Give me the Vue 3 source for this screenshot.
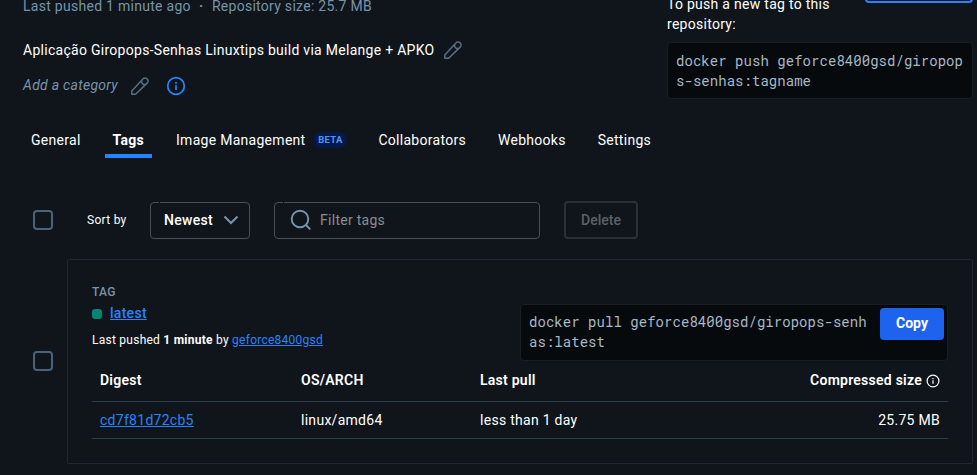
<script setup>
const tabs = [
  { label: 'General' },
  { label: 'Tags', active: true },
  { label: 'Image Management', badge: 'BETA' },
  { label: 'Collaborators' },
  { label: 'Webhooks' },
  { label: 'Settings' },
]
const images = [
  { digest: 'cd7f81d72cb5', arch: 'linux/amd64', lastPull: 'less than 1 day', size: '25.75 MB' },
]
</script>

<template>
  <main class="page">
    <header class="header">
      <div class="summary">
        <p class="meta"><span>Last pushed 1 minute ago</span><span class="dot">·</span><span class="repo-size">Repository size: 25.7 MB</span></p>
        <div class="description">
          <span class="desc-text">Aplicação Giropops-Senhas Linuxtips build via Melange + APKO</span>
          <svg class="pencil" viewBox="0 0 20 20"><path d="M1.800 18.200V15L12.900 2.900a2.700 2.700 0 0 1 4.200 0a2.700 2.700 0 0 1 0 4.200L5.600 18.200zM11.600 4.400v2.200l1.800 1.900h2.200" /></svg>
        </div>
        <div class="category">
          <em class="cat-text">Add a category</em>
          <svg class="pencil" viewBox="0 0 20 20"><path d="M1.800 18.200V15L12.900 2.900a2.700 2.700 0 0 1 4.200 0a2.700 2.700 0 0 1 0 4.200L5.600 18.200zM11.600 4.400v2.200l1.800 1.900h2.200" /></svg>
          <svg class="info" viewBox="0 0 20 20"><circle cx="10" cy="10" r="8.3" /><path d="M10 9.2v4.8M10 6v1.8" /></svg>
        </div>
      </div>
      <aside class="push">
        <div class="push-top">
          <p class="push-text">To push a new tag to this repository:</p>
          <div class="public-view"></div>
        </div>
        <code class="code">docker push geforce8400gsd/giropops-senhas:tagname</code>
      </aside>
    </header>

    <nav class="tabs">
      <a v-for="t in tabs" :key="t.label" class="tab" :class="{ active: t.active }">
        <span class="tab-label">{{ t.label }}</span>
        <span v-if="t.badge" class="badge">{{ t.badge }}</span>
      </a>
    </nav>

    <div class="toolbar">
      <span class="checkbox"></span>
      <span class="sort-label">Sort by</span>
      <div class="select">
        <span class="select-value">Newest</span>
        <svg class="chevron" viewBox="0 0 16 10"><path d="M1.5 1.5L8 8l6.500-6.500" /></svg>
      </div>
      <div class="search">
        <svg class="magnifier" viewBox="0 0 22 22"><circle cx="10" cy="10" r="8.300" /><path d="M16 16l4.300 4.300" /></svg>
        <span class="placeholder">Filter tags</span>
      </div>
      <button class="delete" disabled>Delete</button>
    </div>

    <section class="tag-row">
      <span class="checkbox"></span>
      <article class="card">
        <div class="card-top">
          <div class="tag-info">
            <div class="eyebrow">TAG</div>
            <div class="tag-name"><span class="status"></span><a class="link tag-link">latest</a></div>
            <div class="pushed"><span>Last pushed <b>1 minute</b> by <a class="link user">geforce8400gsd</a></span></div>
          </div>
          <div class="code pull">
            <code class="pull-text">docker pull geforce8400gsd/giropops-senhas:latest</code>
            <button class="copy">Copy</button>
          </div>
        </div>
        <div class="table">
          <div class="row head">
            <span>Digest</span><span>OS/ARCH</span><span>Last pull</span>
            <span class="right"><span class="size-label">Compressed size</span><svg class="info-small" viewBox="0 0 14 14"><circle cx="7" cy="7" r="5.900" /><path d="M7 6.300v3.500M7 4v1.300" /></svg></span>
          </div>
          <div v-for="i in images" :key="i.digest" class="row">
            <span><a class="link digest">{{ i.digest }}</a></span><span class="arch">{{ i.arch }}</span><span class="last">{{ i.lastPull }}</span><span class="right size">{{ i.size }}</span>
          </div>
        </div>
      </article>
    </section>
  </main>
</template>

<style>
body {
  background: #10151b;
}
</style>

<style scoped>
* {
  box-sizing: border-box;
}
.page {
  width: 977px;
  height: 475px;
  overflow: hidden;
  background: #10151b;
  color: #fff;
  font: 400 14px/20px Roboto, sans-serif;
  letter-spacing: 0.28px;
}
p {
  margin: 0;
}
svg {
  fill: none;
  stroke: currentColor;
  flex: none;
}
.header {
  display: flex;
  justify-content: space-between;
  height: 122px;
  padding: 0 4px 0 23px;
}
.meta {
  display: flex;
  margin-top: -4px;
  color: #7794ab;
}
.dot {
  width: 21px;
  text-align: center;
  font-weight: 700;
}
.description {
  display: flex;
  align-items: center;
  height: 20px;
  margin-top: 24px;
}
.category {
  display: flex;
  align-items: center;
  height: 20px;
  margin-top: 16px;
}
.cat-text {
  margin-bottom: 2px;
  color: #7794ab;
}
.pencil {
  width: 20px;
  height: 20px;
  margin-left: 9px;
  color: #556f84;
  stroke-width: 1.5;
  stroke-linejoin: round;
}
.category .pencil {
  margin-left: 12px;
}
.info {
  width: 20px;
  height: 20px;
  margin-left: 16px;
  color: #2684ff;
  stroke-width: 1.7;
}
.push {
  width: 306px;
}
.push-top {
  display: flex;
  justify-content: space-between;
  height: 48px;
  margin-top: -6px;
}
.push-text {
  width: 180px;
}
.public-view {
  width: 108px;
  height: 9px;
  border: 2px solid #2684ff;
  border-top: 0;
  border-radius: 0 0 4px 4px;
}
.code {
  display: block;
  height: 57px;
  padding: 8px;
  background: #070a0c;
  border: 1px solid #181f24;
  border-radius: 4px;
  color: #a6b7c5;
  font: 400 14px/20px 'Roboto Mono', 'DejaVu Sans Mono', monospace;
  letter-spacing: 0.04px;
  word-break: break-all;
}
.tabs {
  display: flex;
  gap: 16px;
  height: 36px;
  padding-left: 23px;
}
.tab {
  display: flex;
  align-items: center;
  gap: 8px;
  padding: 4px 8px 0;
  border-bottom: 4px solid transparent;
}
.tab.active {
  font-weight: 700;
  border-color: #2684ff;
}
.badge {
  width: 34px;
  height: 16px;
  margin-right: -1px;
  border-radius: 8px;
  background: #06194a;
  color: #4c98fa;
  font: 700 9.5px/16px Roboto, sans-serif;
  letter-spacing: 0.3px;
  text-align: center;
}
.toolbar {
  display: flex;
  align-items: center;
  height: 38px;
  margin-top: 43px;
  padding-left: 33px;
}
.checkbox {
  flex: none;
  width: 20px;
  height: 20px;
  border: 2px solid #48637a;
  border-radius: 4px;
}
.sort-label {
  width: 63px;
  margin-left: 34px;
  font-size: 12px;
}
.select,
.search {
  position: relative;
  display: flex;
  align-items: center;
  height: 37px;
  margin-top: 1px;
  border: 1px solid #4c4f52;
  border-radius: 4px;
}
.select::before,
.search::before {
  content: '';
  position: absolute;
  top: -1px;
  left: 8px;
  width: 1px;
  height: 1px;
  background: #10151b;
}
.select {
  width: 100px;
  justify-content: space-between;
  padding: 0 10px 0 13px;
  font-weight: 500;
}
.select-value,
.placeholder {
  margin-bottom: 2px;
}
.chevron {
  width: 16px;
  height: 10px;
  margin-bottom: 2px;
  color: #7794ab;
  stroke-width: 2;
}
.search {
  width: 266px;
  margin-left: 24px;
  padding-left: 15px;
}
.magnifier {
  width: 22px;
  height: 22px;
  margin-bottom: 2px;
  color: #7794ab;
  stroke-width: 1.9;
}
.placeholder {
  margin-left: 8px;
  color: #8a8d90;
}
.delete {
  width: 74px;
  height: 38px;
  margin-left: 24px;
  padding: 0;
  background: transparent;
  border: 2px solid #2b3036;
  border-radius: 4px;
  color: #5d6165;
  font: 500 14px/20px Roboto, sans-serif;
}
.tag-row {
  display: flex;
  align-items: center;
  gap: 14px;
  margin-top: 20px;
  padding-left: 33px;
}
.tag-row .checkbox {
  margin-bottom: 2px;
}
.card {
  width: 906px;
  height: 205px;
  padding: 22px 24px;
  border: 1px solid #20272e;
  border-radius: 2px;
}
.card-top {
  display: flex;
  justify-content: space-between;
  height: 77px;
}
.eyebrow {
  height: 21px;
  color: #7794ab;
  font-size: 12px;
  font-weight: 500;
}
.tag-name {
  display: flex;
  align-items: center;
  height: 20px;
}
.status {
  width: 10px;
  height: 10px;
  margin: 1px 8px 0 0;
  border-radius: 3px;
  background: #068572;
}
.link {
  color: #2684ff;
  text-decoration: underline;
}
.tag-link {
  font-weight: 500;
}
.pushed {
  height: 20px;
  margin-top: 7px;
  font-size: 12px;
  letter-spacing: 0.25px;
}
.pull {
  display: flex;
  justify-content: space-between;
  width: 428px;
  height: 57px;
  margin: 22px 0 0;
  padding: 3px 3px 0 8px;
}
.pull-text {
  width: 343px;
  padding-top: 4px;
  font: inherit;
}
.copy {
  width: 64px;
  height: 32px;
  padding: 0 0 2px;
  border: 0;
  border-radius: 4px;
  background: #1d63ed;
  color: #fff;
  font: 700 14px/30px Roboto, sans-serif;
}
.row {
  display: grid;
  grid-template-columns: 201px 179px 1fr 200px;
  align-items: center;
  height: 37px;
  padding: 0 8px;
  border-bottom: 1px solid #2b3f4e;
}
.row.head {
  height: 43px;
  font-weight: 600;
  letter-spacing: 0.25px;
}
.right {
  display: flex;
  justify-content: flex-end;
  align-items: center;
}
.size {
  margin-bottom: 1px;
}
.info-small {
  width: 14px;
  height: 14px;
  margin: 2px 0 0 4px;
  stroke-width: 1.2;
}
</style>
